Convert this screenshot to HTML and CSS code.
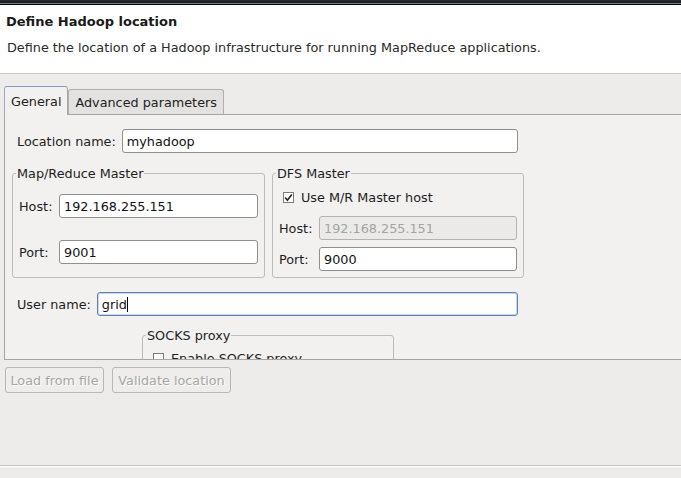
FILE: index.html
```html
<!DOCTYPE html>
<html>
<head>
<meta charset="utf-8">
<link rel="stylesheet" href="styles.css">
</head>
<body>
<div class="topbar"></div>
<header class="header">
  <div class="title">Define Hadoop location</div>
  <div class="desc">Define the location of a Hadoop infrastructure for running MapReduce applications.</div>
</header>
<main class="main">
  <div class="tabs">
    <div class="tab active">General</div>
    <div class="tab">Advanced parameters</div>
  </div>
  <div class="panel">
    <div class="row">
      <span class="lbl">Location name:</span>
      <div class="entry">myhadoop</div>
    </div>
    <div class="groups">
      <fieldset class="group mr">
        <legend>Map/Reduce Master</legend>
        <div class="grid">
          <span class="lbl">Host:</span><div class="entry">192.168.255.151</div>
          <span class="lbl">Port:</span><div class="entry">9001</div>
        </div>
      </fieldset>
      <fieldset class="group dfs">
        <legend>DFS Master</legend>
        <div class="check">
          <span class="box"><svg width="11" height="11" viewBox="0 0 11 11"><path d="M2.2 5.6 L4.4 8.2 L8.8 2.4" fill="none" stroke="#222" stroke-width="1.6"/></svg></span>
          <span>Use M/R Master host</span>
        </div>
        <div class="grid tight">
          <span class="lbl">Host:</span><div class="entry disabled">192.168.255.151</div>
          <span class="lbl">Port:</span><div class="entry">9000</div>
        </div>
      </fieldset>
    </div>
    <div class="row user">
      <span class="lbl">User name:</span>
      <div class="entry focus">grid<span class="caret"></span></div>
    </div>
    <fieldset class="group socks">
      <legend>SOCKS proxy</legend>
      <div class="check">
        <span class="box"></span>
        <span>Enable SOCKS proxy</span>
      </div>
    </fieldset>
  </div>
  <div class="buttons">
    <div class="btn w1">Load from file</div>
    <div class="btn w2">Validate location</div>
  </div>
</main>
<footer class="footer"></footer>
</body>
</html>
```
FILE: styles.css
```css
html, body {
  margin: 0;
  padding: 0;
}
body {
  width: 681px;
  height: 478px;
  overflow: hidden;
  display: flex;
  flex-direction: column;
  background: #edecea;
  font-family: "DejaVu Sans", sans-serif;
  font-size: 12.8px;
  line-height: 15px;
  color: #1e1e1e;
}
.topbar {
  height: 5px;
  flex: none;
  background: linear-gradient(#2c2c2e 0, #1b1b1c 3px, #6f7d8e 3px, #6f7d8e 4px, #050505 4px);
}
.header {
  flex: none;
  height: 68px;
  background: #ffffff;
  border-bottom: 1px solid #c8c7c5;
  box-sizing: content-box;
}
.title {
  font-weight: bold;
  font-size: 13px;
  margin: 9px 0 0 6px;
  color: #1a1a1a;
}
.desc {
  margin: 11px 0 0 7px;
  color: #2a2a2a;
}
.main {
  flex: 1;
  padding: 12px 0 0 4px;
  display: flex;
  flex-direction: column;
}
.tabs {
  display: flex;
  align-items: flex-end;
  height: 28px;
}
.tab {
  box-sizing: border-box;
  height: 25px;
  padding: 5px 6px 0 6px;
  background: #e3e2e0;
  border: 1px solid #b0afad;
  border-bottom: none;
  border-radius: 3px 3px 0 0;
  color: #222;
}
.tab.active {
  height: 29px;
  margin-bottom: -1px;
  padding-top: 7px;
  background: #f2f1f0;
  border-color: #7d9dc8 #a7a6a4 transparent #98aac4;
  position: relative;
  z-index: 1;
}
.panel {
  box-sizing: border-box;
  height: 246px;
  width: 700px;
  flex: none;
  border: 1px solid #a7a6a4;
  background: #f2f1f0;
  padding: 14px 0 0 7px;
  overflow: hidden;
}
.row {
  display: flex;
  align-items: center;
  gap: 6px;
  width: 501px;
  margin-left: 5px;
}
.user {
  margin-top: 14px;
}
.row .entry {
  flex: 1;
}
.entry {
  box-sizing: border-box;
  height: 24px;
  border: 1px solid #8f8f8f;
  border-radius: 3px;
  background: #ffffff;
  padding: 4px 0 0 4px;
  color: #111;
  white-space: nowrap;
}
.entry.disabled {
  background: #ebeae8;
  border-color: #b4b3b1;
  color: #a4a4a4;
}
.entry.focus {
  border-color: #5c80b8;
  box-shadow: inset 0 0 0 1px #c9d7ec;
}
.caret {
  display: inline-block;
  width: 1px;
  height: 15px;
  background: #000;
  vertical-align: top;
}
.groups {
  display: flex;
  gap: 7px;
  margin-top: 13px;
}
.group {
  margin: 0;
  min-width: 0;
  box-sizing: border-box;
  border: 1px solid #bdbcba;
  border-radius: 3px;
}
.group legend {
  padding: 0 1px;
  margin-left: -3px;
  line-height: 15px;
  color: #1e1e1e;
}
.mr {
  width: 253px;
  padding: 13px 6px 13px 6px;
}
.dfs {
  width: 252px;
  padding: 8px 6px 5px 6px;
}
.grid {
  display: grid;
  grid-template-columns: 40px 1fr;
  row-gap: 22px;
  align-items: center;
}
.grid.tight {
  row-gap: 7px;
  margin-top: 11px;
}
.check {
  display: flex;
  align-items: center;
  gap: 7px;
  height: 16px;
  padding-left: 4px;
}
.box {
  box-sizing: border-box;
  width: 11px;
  height: 11px;
  border: 1px solid #7c7c7c;
  background: #ffffff;
  display: flex;
  align-items: center;
  justify-content: center;
}
.box svg {
  flex: none;
}
.socks {
  width: 252px;
  margin: 12px 0 0 130px;
  padding: 7px 6px 20px 6px;
}
.buttons {
  display: flex;
  gap: 8px;
  margin: 7px 0 0 1px;
}
.btn {
  box-sizing: border-box;
  height: 26px;
  border: 1px solid #b8b7b5;
  border-radius: 3px;
  background: #eeedeb;
  color: #a6a5a3;
  text-shadow: 1px 1px 0 #ffffff;
  padding-top: 5px;
  text-align: center;
}
.w1 { width: 99px; }
.w2 { width: 119px; }
.footer {
  flex: none;
  height: 12px;
  border-top: 1px solid #c4c3c1;
  box-shadow: inset 0 1px 0 #ffffff;
}
```
